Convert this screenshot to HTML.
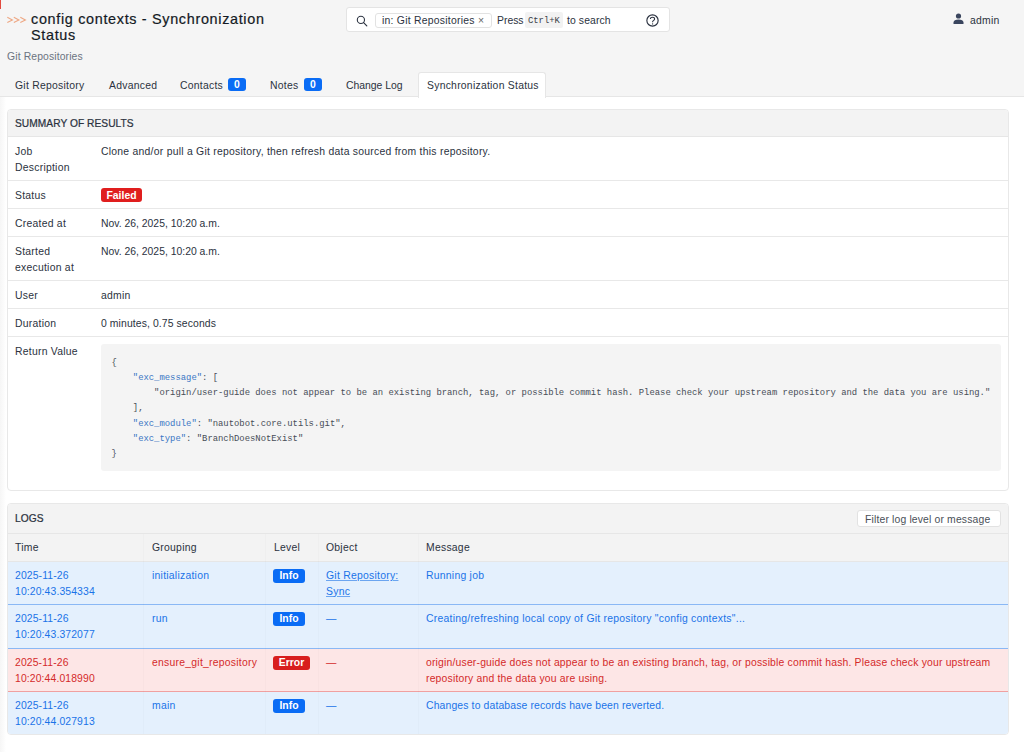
<!DOCTYPE html>
<html><head><meta charset="utf-8">
<style>
*{box-sizing:border-box;margin:0;padding:0}
html,body{width:1024px;height:752px;overflow:hidden;background:#fff}
body{font-family:"Liberation Sans",sans-serif;font-size:10.4px;line-height:15.6px;color:#2b3240;position:relative;letter-spacing:0.25px}
.abs{position:absolute;white-space:nowrap}
#hdr{position:absolute;left:0;top:0;width:1024px;height:97px;background:#f5f5f5;border-bottom:1px solid #e6e6e6}
#redbar{position:absolute;left:0;top:0;width:1px;height:9px;background:#e24a3f}
#title{left:31px;top:12px;font-size:14.4px;line-height:15.6px;color:#141a24;letter-spacing:0.68px;-webkit-text-stroke:0.2px #141a24}
#crumb{left:7px;top:49px;color:#6b7380;letter-spacing:0.12px}
#search{position:absolute;left:346px;top:7px;width:324px;height:25px;background:#fff;border:1px solid #e4e4e4;border-radius:3px}
.chip{position:absolute;left:28px;top:5px;width:117px;height:15px;border:1px solid #e2e2e2;border-radius:3px}
.kbd{position:absolute;left:178px;top:4px;width:38px;height:16px;background:#f2f2f2;border-radius:2px}
.tab{position:absolute;top:73px;height:24px;color:#2b3240}
.tab span.t{position:absolute;top:5px;white-space:nowrap}
.badge{position:absolute;background:#0a6cf5;color:#fff;border-radius:3px;font-weight:bold;text-align:center}
#acttab{position:absolute;left:418px;top:72px;width:128px;height:26px;background:#fff;border:1px solid #e6e6e6;border-bottom:none;border-radius:3px 3px 0 0}
.card{position:absolute;left:7px;width:1002px;border:1px solid #e8e8e8;border-radius:4px;background:#fff;overflow:hidden}
.chead{position:absolute;left:0;top:0;width:1000px;background:#f3f3f3;border-bottom:1px solid #e6e6e6}
.chead b{position:absolute;left:7px;color:#2b3240;font-size:10.2px;letter-spacing:0.05px;font-weight:normal;-webkit-text-stroke:0.22px #2b3240}
.row{position:absolute;left:0;width:1000px;border-bottom:1px solid #e8e8e8}
.lbl{position:absolute;left:7px;top:7px;white-space:normal;width:80px}
.val{position:absolute;left:93px;top:7px;white-space:nowrap}
.failed{position:absolute;left:93px;top:7px;width:41px;height:14px;background:#e01e1e;color:#fff;border-radius:3px;font-weight:bold;text-align:center;line-height:15px;letter-spacing:0}
pre{position:absolute;left:93px;top:7px;width:900px;height:127px;background:#f4f4f4;border-radius:3px;font-family:"Liberation Mono",monospace;font-size:8.9px;line-height:15.27px;color:#474d57;padding:11.5px 10.5px;letter-spacing:0}
.k{color:#3a76c4}
.lh{position:absolute;top:0;height:28px}
.trow{position:absolute;left:0;width:1000px}
.trow .c{position:absolute;top:6px;white-space:nowrap}
.info{position:absolute;background:#0a6cf5;color:#fff;border-radius:3px;font-weight:bold;text-align:center;height:13.5px;line-height:13.5px;letter-spacing:0}
.err{background:#d81e1e}
.blue{color:#1a73e8}
.red{color:#d42a2a}
</style></head>
<body>
<div id="hdr"></div><div style="position:absolute;left:0;top:97px;width:6px;height:655px;background:linear-gradient(to right,#f6f6f6,#fcfcfc 70%,#fff)"></div>
<div id="redbar"></div>
<svg class="abs" style="left:4px;top:12px" width="26" height="16" viewBox="0 0 26 16"><path d="M3.3 5.2L8.4 7.9L3.3 10.6M9.8 5.2L14.9 7.9L9.8 10.6M16.3 5.2L21.4 7.9L16.3 10.6" fill="none" stroke="#eea783" stroke-width="1.1"/></svg>
<div id="title" class="abs">config contexts - Synchronization<br>Status</div>
<div id="crumb" class="abs">Git Repositories</div>

<div id="search">
  <svg class="abs" style="left:9px;top:7px" width="12" height="12" viewBox="0 0 12 12"><circle cx="4.9" cy="4.9" r="3.6" fill="none" stroke="#2b3240" stroke-width="1.1"/><path d="M7.6 7.6L10.8 10.8" stroke="#2b3240" stroke-width="1.2" stroke-linecap="round"/></svg>
  <div class="chip"><span class="abs" style="left:6px;top:-1px">in: Git Repositories</span><span class="abs" style="left:102px;top:-1px;color:#666">×</span></div>
  <span class="abs" style="left:150px;top:5px;letter-spacing:0">Press</span>
  <div class="kbd"><span class="abs" style="left:3px;top:2px;font-family:'Liberation Mono',monospace;font-size:8.86px;letter-spacing:0;color:#3a3f48">Ctrl+K</span></div>
  <span class="abs" style="left:220px;top:5px;letter-spacing:0.1px">to search</span>
  <svg class="abs" style="left:299px;top:6px" width="13" height="13" viewBox="0 0 13 13"><circle cx="6.5" cy="6.5" r="5.65" fill="none" stroke="#2b3240" stroke-width="1.15"/><path d="M4.4 5.0C4.4 3.8 5.3 3.2 6.5 3.2C7.7 3.2 8.6 3.9 8.6 5.0C8.6 6.3 6.6 6.4 6.6 7.9V8.3" fill="none" stroke="#2b3240" stroke-width="1.1"/><circle cx="6.6" cy="9.9" r="0.65" fill="#2b3240"/></svg>
</div>

<svg class="abs" style="left:953px;top:13px" width="11" height="11" viewBox="0 0 11 11"><circle cx="5.5" cy="3" r="2.6" fill="#3a455e"/><path d="M0.5 11v-1.5c0-2 2-3 5-3s5 1 5 3V11z" fill="#3a455e"/></svg>
<span class="abs" style="left:970px;top:13px;color:#2b3240">admin</span>

<div id="acttab"></div>
<div class="tab" style="left:15px"><span class="t">Git Repository</span></div>
<div class="tab" style="left:109px"><span class="t">Advanced</span></div>
<div class="tab" style="left:180px"><span class="t">Contacts</span><span class="badge" style="left:48px;top:5px;width:18px;height:13px;line-height:13px">0</span></div>
<div class="tab" style="left:270px"><span class="t">Notes</span><span class="badge" style="left:34px;top:5px;width:18px;height:13px;line-height:13px">0</span></div>
<div class="tab" style="left:346px"><span class="t" style="letter-spacing:0">Change Log</span></div>
<div class="tab" style="left:427px"><span class="t">Synchronization Status</span></div>

<!-- Summary card -->
<div class="card" style="top:109px;height:382px">
  <div class="chead" style="height:27px"><b style="top:6px">SUMMARY OF RESULTS</b></div>
  <div class="row" style="top:27px;height:44px"><div class="lbl">Job<br>Description</div><div class="val">Clone and/or pull a Git repository, then refresh data sourced from this repository.</div></div>
  <div class="row" style="top:71px;height:28px"><div class="lbl">Status</div><div class="failed">Failed</div></div>
  <div class="row" style="top:99px;height:28px"><div class="lbl">Created at</div><div class="val" style="letter-spacing:0">Nov. 26, 2025, 10:20 a.m.</div></div>
  <div class="row" style="top:127px;height:44px"><div class="lbl">Started<br>execution at</div><div class="val" style="letter-spacing:0">Nov. 26, 2025, 10:20 a.m.</div></div>
  <div class="row" style="top:171px;height:28px"><div class="lbl">User</div><div class="val">admin</div></div>
  <div class="row" style="top:199px;height:28px"><div class="lbl">Duration</div><div class="val" style="letter-spacing:0.1px">0 minutes, 0.75 seconds</div></div>
  <div class="row" style="top:227px;height:154px;border:none"><div class="lbl">Return Value</div>
<pre>{
    <span class="k">"exc_message"</span>: [
        "origin/user-guide does not appear to be an existing branch, tag, or possible commit hash. Please check your upstream repository and the data you are using."
    ],
    <span class="k">"exc_module"</span>: "nautobot.core.utils.git",
    <span class="k">"exc_type"</span>: "BranchDoesNotExist"
}</pre>
  </div>
</div>

<!-- Logs card -->
<div class="card" style="top:503px;height:232px">
  <div class="chead" style="height:30px"><b style="top:7px">LOGS</b>
    <div class="abs" style="left:849px;top:6px;width:144px;height:17px;background:#fff;border:1px solid #e2e2e2;border-radius:3px"><span class="abs" style="left:7px;top:1px;color:#4a5058;letter-spacing:0.15px">Filter log level or message</span></div>
  </div>
  <div class="trow" style="top:30px;height:28px;background:#f3f3f3;border-bottom:1px solid #e6e6e6">
    <span class="c" style="left:7px">Time</span><span class="c" style="left:144px">Grouping</span><span class="c" style="left:266px">Level</span><span class="c" style="left:318px">Object</span><span class="c" style="left:418px">Message</span>
  </div>
  <div class="trow blue" style="top:58px;height:43px;background:#e4f0fd;border-bottom:1px solid #8ab8f5">
    <span class="c" style="left:7px;letter-spacing:0.12px">2025-11-26<br>10:20:43.354334</span><span class="c" style="left:144px">initialization</span><span class="info" style="left:265px;top:7px;width:32px">Info</span><span class="c" style="left:318px;text-decoration:underline;text-decoration-color:rgba(26,115,232,0.6);text-underline-offset:1px">Git Repository:<br>Sync</span><span class="c" style="left:418px">Running job</span>
  </div>
  <div class="trow blue" style="top:101px;height:44px;background:#e4f0fd;border-bottom:1px solid #8ab8f5">
    <span class="c" style="left:7px;letter-spacing:0.12px">2025-11-26<br>10:20:43.372077</span><span class="c" style="left:144px">run</span><span class="info" style="left:265px;top:7px;width:32px">Info</span><span class="c" style="left:318px">—</span><span class="c" style="left:418px">Creating/refreshing local copy of Git repository "config contexts"...</span>
  </div>
  <div class="trow red" style="top:145px;height:43px;background:#fde6e6;border-bottom:1px solid #f0a0a0">
    <span class="c" style="left:7px;letter-spacing:0.12px">2025-11-26<br>10:20:44.018990</span><span class="c" style="left:144px">ensure_git_repository</span><span class="info err" style="left:265px;top:7px;width:37px">Error</span><span class="c" style="left:318px">—</span><span class="c" style="left:418px;letter-spacing:0.18px">origin/user-guide does not appear to be an existing branch, tag, or possible commit hash. Please check your upstream<br>repository and the data you are using.</span>
  </div>
  <div class="trow blue" style="top:188px;height:42px;background:#e4f0fd">
    <span class="c" style="left:7px;letter-spacing:0.12px">2025-11-26<br>10:20:44.027913</span><span class="c" style="left:144px">main</span><span class="info" style="left:265px;top:7px;width:32px">Info</span><span class="c" style="left:318px">—</span><span class="c" style="left:418px;letter-spacing:0.14px">Changes to database records have been reverted.</span>
  </div>
  <div style="position:absolute;left:135px;top:30px;width:1px;height:200px;background:rgba(0,0,0,0.014)"></div>
  <div style="position:absolute;left:257px;top:30px;width:1px;height:200px;background:rgba(0,0,0,0.014)"></div>
  <div style="position:absolute;left:310px;top:30px;width:1px;height:200px;background:rgba(0,0,0,0.014)"></div>
  <div style="position:absolute;left:410px;top:30px;width:1px;height:200px;background:rgba(0,0,0,0.014)"></div>
</div>
</body></html>
